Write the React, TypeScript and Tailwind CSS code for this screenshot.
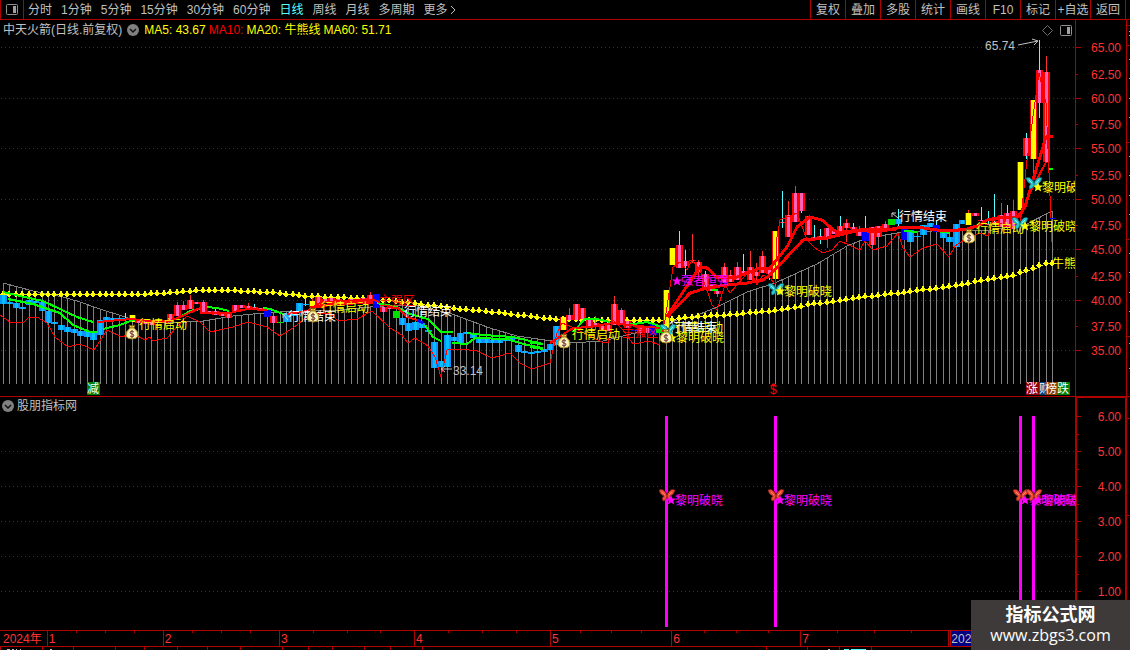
import React from 'react';

type Kind = 'up' | 'down' | 'signal' | 'navy' | 'green';

// [index, top, bottom, kind, wickTop?, wickBottom?, cyanWick?]
type Candle = [number, number, number, Kind, number?, number?, boolean?];

const periods = ['分时', '1分钟', '5分钟', '15分钟', '30分钟', '60分钟', '日线', '周线', '月线', '多周期'];
const tools = ['复权', '叠加', '多股', '统计', '画线', 'F10', '标记', '+自选', '返回'];

const months = [
  { label: '1', size: 'flex-[116]' },
  { label: '2', size: 'flex-[116]' },
  { label: '3', size: 'flex-[135]' },
  { label: '4', size: 'flex-[136]' },
  { label: '5', size: 'flex-[121]' },
  { label: '6', size: 'flex-[129]' },
  { label: '7', size: 'flex-[148]' },
];

const prices: [string, number][] = [
  ['65.00', 47], ['62.50', 74], ['60.00', 98], ['57.50', 124], ['55.00', 148], ['52.50', 175], ['50.00', 199],
  ['47.50', 225], ['45.00', 249], ['42.50', 276], ['40.00', 300], ['37.50', 326], ['35.00', 350],
];

const levels: [string, number][] = [
  ['6.00', 416], ['5.00', 451], ['4.00', 486], ['3.00', 521], ['2.00', 556], ['1.00', 591],
];

const candles: Candle[] = [
  [0, 295, 304, 'down', 291, 304, true], [1, 302, 304, 'down'], [2, 303, 308, 'down'], [3, 307, 309, 'down'],
  [4, 300, 305, 'down'], [5, 301, 303, 'down'], [6, 302, 311, 'down'], [7, 311, 323, 'down'],
  [8, 322, 324, 'down'], [9, 325, 330, 'down'], [10, 327, 332, 'down'], [11, 329, 333, 'down'],
  [12, 331, 336, 'down'], [13, 331, 337, 'down'], [14, 333, 340, 'down'], [15, 320, 335, 'down'],
  [16, 317, 320, 'down'], [17, 318, 320, 'down'], [18, 318, 320, 'down'], [19, 318, 320, 'down', 313, 320, true],
  [20, 315, 322, 'signal'], [21, 320, 323, 'up'], [22, 321, 324, 'up'], [23, 322, 325, 'up'],
  [24, 320, 323, 'up'], [25, 320, 323, 'up'], [26, 314, 322, 'up'], [27, 305, 316, 'up', 302, 316],
  [28, 305, 310, 'up', 301, 310], [29, 300, 309, 'up', 295, 309], [30, 302, 304, 'up'], [31, 302, 313, 'up', 300, 313],
  [32, 311, 314, 'up'], [33, 311, 315, 'up', 309, 315, true], [34, 313, 316, 'up'], [35, 312, 318, 'up'],
  [36, 305, 312, 'up'], [37, 305, 308, 'up'], [38, 306, 309, 'up', 303, 309], [39, 307, 309, 'up', 304, 309, true],
  [40, 308, 310, 'up'], [41, 309, 317, 'navy'], [42, 316, 323, 'up'], [43, 322, 323, 'green'],
  [44, 313, 322, 'down'], [45, 313, 316, 'down'], [46, 303, 311, 'down'], [47, 304, 305, 'down', 298, 306, true],
  [48, 301, 307, 'signal', 298, 308], [49, 297, 305, 'up'], [50, 299, 303, 'up'], [51, 298, 303, 'up'],
  [52, 299, 304, 'up'], [53, 300, 304, 'up'], [54, 299, 303, 'up'], [55, 299, 303, 'up'],
  [56, 298, 302, 'up'], [57, 295, 302, 'up', 292, 302], [58, 294, 308, 'navy'], [59, 307, 312, 'up'],
  [60, 307, 309, 'up'], [61, 311, 318, 'green'], [62, 318, 325, 'down'], [63, 323, 331, 'down'],
  [64, 322, 330, 'down'], [65, 323, 328, 'down'], [66, 330, 332, 'down'], [67, 342, 368, 'down'],
  [68, 361, 367, 'down'], [69, 335, 367, 'down'], [70, 337, 341, 'down'], [71, 333, 344, 'down'],
  [72, 332, 334, 'down'], [73, 333, 338, 'down'], [74, 337, 343, 'down'], [75, 339, 343, 'down'],
  [76, 340, 343, 'down'], [77, 338, 343, 'down'], [78, 338, 341, 'down'], [79, 337, 340, 'down'],
  [80, 345, 352, 'down'], [81, 351, 353, 'down'], [82, 352, 354, 'down'], [83, 351, 353, 'down'],
  [84, 349, 352, 'down'], [85, 344, 350, 'down'], [86, 326, 345, 'down'], [87, 317, 330, 'signal'],
  [88, 315, 320, 'up', 308, 320], [89, 304, 320, 'up'], [90, 308, 319, 'up'], [91, 318, 326, 'up'],
  [92, 323, 327, 'up', 316, 330], [93, 326, 330, 'up'], [94, 325, 331, 'up'], [95, 304, 325, 'up', 296, 325],
  [96, 310, 323, 'up', 308, 323], [97, 321, 328, 'up'], [98, 330, 331, 'navy'], [99, 327, 333, 'up'],
  [100, 327, 333, 'up'], [101, 324, 335, 'navy'], [102, 326, 333, 'green'], [103, 290, 328, 'signal'],
  [104, 248, 265, 'signal'], [105, 245, 268, 'up', 231, 268, true], [106, 261, 266, 'up', 250, 275, true],
  [107, 260, 261, 'up', 234, 263], [108, 262, 272, 'up', 260, 276], [109, 274, 288, 'up', 271, 288, true],
  [110, 285, 291, 'up'], [111, 291, 294, 'up', 289, 297], [112, 267, 282, 'up', 263, 282], [113, 275, 282, 'up', 270, 282],
  [114, 267, 280, 'up', 262, 280], [115, 271, 275, 'up', 254, 275, true], [116, 267, 280, 'up', 251, 280],
  [117, 272, 276, 'up', 263, 280], [118, 256, 273, 'up', 251, 273], [119, 270, 274, 'up', 270, 280, true],
  [120, 231, 279, 'signal'], [121, 222, 223, 'up', 191, 228, true], [122, 215, 237, 'up', 201, 237],
  [123, 193, 222, 'up', 186, 222], [124, 193, 211, 'up', 193, 213, true], [125, 216, 235, 'up'],
  [126, 237, 238, 'up', 225, 240, true], [127, 236, 237, 'up', 229, 244, true], [128, 228, 238, 'up', 228, 248],
  [129, 230, 234, 'up'], [130, 226, 236, 'up', 216, 236, true], [131, 223, 228, 'up', 219, 242],
  [132, 227, 229, 'up', 223, 232, true], [133, 230, 236, 'up', 226, 236], [134, 232, 241, 'navy', 216, 241, true],
  [135, 227, 245, 'up'], [136, 226, 237, 'up'], [137, 224, 229, 'up', 221, 229], [138, 219, 225, 'green'],
  [139, 219, 224, 'down', 209, 226, true], [140, 228, 240, 'navy'], [141, 230, 242, 'down'], [142, 236, 237, 'down'],
  [143, 225, 235, 'down'], [144, 223, 227, 'down'], [145, 225, 232, 'navy', 220, 232, true], [146, 230, 238, 'down'],
  [147, 237, 242, 'down'], [148, 224, 247, 'down'], [149, 220, 224, 'down'], [150, 213, 225, 'signal', 210, 225],
  [151, 213, 216, 'up'], [152, 220, 221, 'up', 207, 221, true], [153, 224, 225, 'up', 211, 225, true],
  [154, 222, 224, 'up', 194, 224, true], [155, 215, 227, 'up', 203, 227], [156, 213, 227, 'up', 205, 227, true],
  [157, 211, 229, 'up', 200, 229], [158, 162, 210, 'signal'], [159, 138, 156, 'up', 133, 159, true],
  [160, 100, 159, 'signal', 100, 177], [161, 70, 103, 'up', 40, 118, true], [162, 72, 162, 'up', 56, 162],
];

const envelope: [number, number][] = [
  [3, 283], [33, 291], [63, 297], [80, 302], [97, 308], [128, 318], [160, 322], [187, 322], [203, 321], [233, 316],
  [253, 314], [280, 312], [340, 310], [370, 307], [398, 305], [417, 305], [452, 314], [490, 328], [517, 336],
  [552, 341], [570, 343], [603, 341], [627, 335], [657, 328], [677, 320], [693, 317], [717, 307], [747, 292],
  [775, 283], [817, 264], [847, 246], [867, 238], [897, 233], [950, 230], [985, 231], [1025, 225], [1052, 211],
];

const ma60: [number, number][] = [
  [3, 294], [130, 294], [163, 293], [200, 290], [227, 290], [253, 291], [280, 293], [310, 296], [363, 298], [417, 303],
  [453, 308], [487, 311], [537, 317], [557, 319], [597, 320], [657, 320], [697, 316], [720, 315], [777, 310],
  [810, 304], [883, 294], [903, 292], [950, 286], [983, 280], [1013, 275], [1045, 263], [1053, 263],
];

const thinRedLines = [
  '98,322 130,319 150,321 170,321 187,314 200,308',
  '200,313 230,313 247,309 267,310',
  '287,314 307,311 320,303 337,301 373,300 380,302',
  '387,307 398,308 407,317 417,320',
  '550,343 573,328 590,327 613,323 627,325 660,328',
  '1020,217 1030,193 1046,162',
];

const redLines = [
  '310,308 333,304 373,302',
  '667,316 683,292 700,267 707,268 717,277 737,277 760,268 770,268 787,247 797,227 810,217 822,220 830,227 838,233 857,230 877,232 897,228 917,227 937,230 950,231 967,229 980,225 987,220 1003,217 1017,218 1025,207 1033,180 1046,137 1053,136',
  '667,317 690,293 707,288 727,285 747,283 763,280 770,275 787,257 803,240 827,238 860,230 897,229',
];

const greenLines = [
  '3,292 20,296 43,301 62,310 77,317 93,322',
  '8,299 33,304 60,313 73,325 90,332 98,332',
  '103,329 120,325 133,320 167,321',
  '180,317 190,311 200,309',
  '207,307 217,308 229,311',
  '263,308 270,309 283,314',
  '377,303 397,307 410,314 428,319 441,332 453,332',
  '425,325 433,337 441,341',
  '452,343 467,344 475,338 507,339 527,345 543,348',
  '467,333 483,335 513,337 543,344',
  '530,343 543,344',
  '530,347 543,349',
  '573,332 585,319 597,319 610,322',
  '627,325 647,322 663,327',
  '711,290 718,290',
  '904,231 917,232',
  '937,231 950,233',
  '1049,169 1053,169',
];

const lowLine =
  '0,315 10,322 23,323 29,317 37,317 47,323 55,337 68,347 80,344 94,350 107,330 122,337 132,333 145,340 150,337 153,341 167,338 187,316 200,322 210,332 233,327 248,322 267,327 280,336 293,328 303,320 313,313 330,313 338,321 357,319 372,311 390,328 402,335 408,343 415,338 428,346 435,357 441,377 447,350 460,349 477,351 492,358 510,353 520,363 532,369 550,363 557,333 562,323 572,327 602,342 608,343 613,320 623,330 633,344 650,341 659,345 665,320 673,267 680,262 687,270 692,260 700,270 712,305 717,310 725,285 730,293 750,270 757,285 763,275 770,278 775,284 777,237 780,220 797,213 807,240 815,248 823,253 832,250 840,241 860,250 865,241 873,250 887,246 898,233 903,248 910,257 923,248 937,244 949,257 955,246 967,238 980,233 988,236 993,220 1007,226 1020,227 1027,160 1039,73 1046,103 1052,242';

const butterflyPath =
  'M0 1 Q4 -1 7 4 L8 6 L9 4 Q12 -1 16 1 Q15 6 11 7 Q14 9 12 12 Q9 12 8 8 Q7 12 4 12 Q2 9 5 7 Q1 6 0 1Z';

const columnX = (i: number) => Math.round(3 + 6.436 * i);

const valueAt = (points: [number, number][], x: number) => {
  const next = points.findIndex(([px]) => px >= x);
  if (next <= 0) return next === 0 ? points[0][1] : points[points.length - 1][1];
  const [x0, y0] = points[next - 1];
  const [x1, y1] = points[next];
  return Math.round(y0 + ((y1 - y0) * (x - x0)) / (x1 - x0));
};

const columns = Array.from({ length: 164 }, (_, i) => columnX(i));

const CandleShape = ({ candle }: { candle: Candle }) => {
  const [i, top, bottom, kind, wickTop, wickBottom, cyan] = candle;
  const x = columnX(i);
  const h = Math.max(bottom - top, 1);
  const colors: Record<Kind, [string, string]> = {
    up: ['#ff0000', '#ff60b8'],
    down: ['#1090ff', '#00c0ff'],
    signal: ['#ff0000', '#ffff00'],
    navy: ['#0000ff', '#0000ff'],
    green: ['#00e000', '#00e000'],
  };
  const [edge, core] = colors[kind];
  const wide = kind === 'signal';
  return (
    <g>
      <rect x={x - 3} y={top} width={7} height={h} fill={edge} />
      <rect x={wide ? x - 2 : x - 1} y={top} width={wide ? 5 : 3} height={h} fill={core} />
      {wickTop !== undefined && wickTop < top && (
        <rect x={x} y={wickTop} width={1} height={top - wickTop} fill={cyan ? '#55ffff' : '#ff3030'} />
      )}
      {wickBottom !== undefined && wickBottom > bottom && (
        <rect x={x} y={bottom} width={1} height={wickBottom - bottom} fill={cyan ? '#55ffff' : '#ff3030'} />
      )}
    </g>
  );
};

const Butterfly = ({ x, y, red }: { x: number; y: number; red?: boolean }) => (
  <g transform={`translate(${x - 8} ${y - 6})`}>
    <path d={butterflyPath} fill={red ? '#f04a38' : '#28c8d0'} stroke={red ? '#7a1c10' : '#0c6070'} strokeWidth="0.6" />
    <path d="M3 3 L6 6 M13 3 L10 6" stroke={red ? '#ff8a60' : '#80f4f4'} />
    <path d="M8 5 V10 M8 5 L6 2 M8 5 L10 2" stroke={red ? '#5a1008' : '#0a5060'} strokeWidth="0.7" />
  </g>
);

const MoneyBag = ({ x, y }: { x: number; y: number }) => (
  <g transform={`translate(${x - 7} ${y - 8})`}>
    <path d="M4 1 L7 2 L10 1 L9 4 H5Z" fill="#f0d040" stroke="#806010" />
    <path d="M5 4 H9 Q14 8 13 12 Q12 15 7 15 Q2 15 1 12 Q0 8 5 4Z" fill="#f8ec90" stroke="#a08020" />
    <circle cx="7" cy="10" r="4" fill="#fff4d0" />
    <path d="M9 8 Q7 6 5 8 Q5 10 7 10 Q9 10 9 12 Q7 14 5 12 M7 6 V14" fill="none" stroke="#703828" />
  </g>
);

const Star = ({ x, y, color }: { x: number; y: number; color: string }) => (
  <polygon
    transform={`translate(${x} ${y})`}
    points="0,-5 1.4,-1.6 5,-1.4 2.2,0.8 3.2,4.4 0,2.4 -3.2,4.4 -2.2,0.8 -5,-1.4 -1.4,-1.6"
    fill={color}
  />
);

const Tag = ({ x, y, color, children }: { x: number; y: number; color: string; children: string }) => (
  <text x={x} y={y + 5} fill={color}>{children}</text>
);

const Badge = ({ x, color, children }: { x: number; color: string; children: string }) => (
  <g>
    <rect x={x} y={382} width={13} height={13} fill={color} />
    <text x={x} y={393} fill="#ffffff">{children}</text>
  </g>
);

const ChevronDot = () => (
  <svg viewBox="0 0 12 12" className="size-3 shrink-0">
    <circle cx="6" cy="6" r="6" fill="#808080" />
    <path d="M3 5 L6 8 L9 5" fill="none" stroke="#101010" strokeWidth="1.5" />
  </svg>
);

const PanelIcon = () => (
  <svg viewBox="0 0 12 11" className="h-[11px] w-3 shrink-0">
    <rect x="0.5" y="0.5" width="11" height="10" rx="1" fill="none" stroke="#909090" />
    <rect x="7" y="2" width="3" height="7" fill="#a0a0a0" />
  </svg>
);

const PriceChart = () => (
  <svg viewBox="0 20 1130 376" className="block h-auto w-full text-[12px]" role="img" aria-label="日线">
    <defs>
      <clipPath id="plot">
        <rect x="0" y="20" width="1075" height="376" />
      </clipPath>
    </defs>

    {/* Grid and price axis */}
    <g shapeRendering="crispEdges">
      {prices.map(([label, y], i) => (
        <g key={label}>
          {i % 2 === 0 && <path d={`M1 ${y + 0.5} H1075`} stroke="#b00000" strokeDasharray="1 3" />}
          <rect x={1076} y={y} width={i % 2 === 0 ? 5 : 2} height={1} fill="#b00000" />
        </g>
      ))}
      <rect x={1075} y={20} width={1} height={376} fill="#b00000" />
      <rect x={1126} y={20} width={1} height={376} fill="#b00000" />
      {[25, 45, 142, 239, 336].map((y) => (
        <rect key={y} x={1127} y={y} width={3} height={1} fill="#b00000" />
      ))}
      {[31, 35, 59, 78, 98, 117, 156, 175, 195, 214, 253, 272, 292, 311, 343, 368].map((y) => (
        <rect key={y} x={1129} y={y} width={1} height={1} fill="#a0a0a0" />
      ))}
    </g>
    <g fill="#ff3232" textAnchor="end">
      {prices.map(([label, y]) => (
        <text key={label} x={1121} y={y + 5}>{label}</text>
      ))}
    </g>

    <g clipPath="url(#plot)">
      <g shapeRendering="crispEdges" fill="#808080">
        {columns.map((x) => {
          const y = valueAt(envelope, x);
          return <rect key={x} x={x} y={y} width={1} height={384 - y} />;
        })}
        <polyline points={envelope.map((p) => p.join(',')).join(' ')} fill="none" stroke="#808080" />
      </g>

      {/* Long average */}
      <g fill="#ffff00" shapeRendering="crispEdges">
        {columns.map((x) => {
          const y = valueAt(ma60, x);
          return <path key={x} d={`M${x - 3} ${y} h1 v-1 h1 v-2 h2 v2 h1 v1 h2 v1 h-2 v1 h-1 v1 h-2 v-1 h-1 v-1 h-1z`} />;
        })}
      </g>

      <g shapeRendering="crispEdges">
        {candles.map((candle) => (
          <CandleShape key={candle[0]} candle={candle} />
        ))}
      </g>

      {/* Short averages */}
      <g fill="none" shapeRendering="crispEdges">
        <polyline points={lowLine} stroke="#ff0000" />
        {greenLines.map((points) => (
          <polyline key={points} points={points} stroke="#00ff00" strokeWidth={2} />
        ))}
        {thinRedLines.map((points) => (
          <polyline key={points} points={points} stroke="#ff0000" strokeWidth={2} />
        ))}
        {redLines.map((points) => (
          <polyline key={points} points={points} stroke="#ff0000" strokeWidth={3} />
        ))}
        <path d="M417 320 L423 323" stroke="#0000ff" strokeWidth={3} />
        <path d="M1050 218 H1056" stroke="#0000ff" />
      </g>

      {/* Signals */}
      <Tag x={379} y={300} color="#ff0000">主强区</Tag>
      <Tag x={622} y={332} color="#ff0000">主强区</Tag>
      <Tag x={139} y={324} color="#ffff00">行情启动</Tag>
      <Tag x={321} y={307} color="#ffff00">行情启动</Tag>
      <Tag x={572} y={334} color="#ffff00">行情启动</Tag>
      <Tag x={675} y={327} color="#ffff00">行情启动</Tag>
      <Tag x={976} y={228} color="#ffff00">行情启动</Tag>
      <Tag x={288} y={316} color="#ffffff">行情结束</Tag>
      <Tag x={404} y={311} color="#ffffff">行情结束</Tag>
      <Tag x={669} y={327} color="#ffffff">行情结束</Tag>
      <Tag x={899} y={216} color="#ffffff">行情结束</Tag>
      <path d="M288 320 L283 314 M283 318 V314 H287 M898 218 L892 213 M892 217 V213 H896" fill="none" stroke="#d0d0d0" />

      <Butterfly x={668} y={330} />
      <Butterfly x={776} y={289} />
      <Butterfly x={1020} y={223} />
      <Butterfly x={1034} y={183} />
      <Star x={677} y={281} color="#ff00ff" />
      <Tag x={681} y={280} color="#ff00ff">强者恒强</Tag>
      <Star x={672} y={338} color="#ffff00" />
      <Tag x={676} y={337} color="#ffff00">黎明破晓</Tag>
      <Star x={780} y={291} color="#ffff00" />
      <Tag x={784} y={291} color="#ffff00">黎明破晓</Tag>
      <Star x={1025} y={226} color="#ffff00" />
      <Tag x={1029} y={226} color="#ffff00">黎明破晓</Tag>
      <Star x={1038} y={187} color="#ffff00" />
      <Tag x={1042} y={187} color="#ffff00">黎明破晓</Tag>
      <Tag x={1052} y={263} color="#ffff00">牛熊线</Tag>
      <MoneyBag x={132} y={332} />
      <MoneyBag x={313} y={315} />
      <MoneyBag x={564} y={341} />
      <MoneyBag x={666} y={336} />
      <MoneyBag x={969} y={236} />

      <Tag x={453} y={370} color="#c0c0c0">33.14</Tag>
      <path d="M441 369 H452 M445 366 L441 369 L445 372" fill="none" stroke="#c0c0c0" />
      <Tag x={985} y={45} color="#c0c0c0">65.74</Tag>
      <path d="M1018 45 L1038 41 M1032 39 L1038 41 L1034 45" fill="none" stroke="#c0c0c0" />

      <Badge x={87} color="#008000">减</Badge>
      <Badge x={1026} color="#900000">涨</Badge>
      <Badge x={1039} color="#004080">财</Badge>
      <Badge x={1045} color="#904000">榜</Badge>
      <Badge x={1057} color="#008000">跌</Badge>
      <text x={770} y={394} fill="#ff0000">$</text>
      <path d="M770 386 L773.5 383 L777 386Z" fill="#ff0000" />
    </g>
  </svg>
);

const IndicatorChart = () => (
  <svg viewBox="0 397 1130 233" className="block h-auto w-full text-[12px]" role="img" aria-label="股朋指标网">
    <defs>
      <clipPath id="indicator">
        <rect x="0" y="397" width="1076" height="233" />
      </clipPath>
    </defs>
    <g shapeRendering="crispEdges">
      {levels.map(([label, y], i) => (
        <g key={label}>
          {i > 0 && <path d={`M1 ${y + 0.5} H1075`} stroke="#b00000" strokeDasharray="1 3" />}
          <rect x={1077} y={y} width={4} height={1} fill="#b00000" />
          {i < 5 && <rect x={1077} y={y + 18} width={2} height={1} fill="#b00000" />}
        </g>
      ))}
      <rect x={1075} y={397} width={2} height={233} fill="#b00000" />
      <rect x={1125} y={397} width={2} height={233} fill="#b00000" />
      <rect x={1075} y={397} width={52} height={1} fill="#b00000" />
      {[418, 515, 612].map((y) => (
        <rect key={y} x={1127} y={y} width={3} height={1} fill="#b00000" />
      ))}
    </g>
    <g fill="#ff3232" textAnchor="end">
      {levels.map(([label, y]) => (
        <text key={label} x={1121} y={y + 5}>{label}</text>
      ))}
    </g>
    <g clipPath="url(#indicator)">
      {[666, 775, 1020, 1033].map((x) => (
        <rect key={x} x={x - 1} y={416} width={3} height={211} fill="#ff00ff" />
      ))}
      {[667, 776, 1021, 1034].map((x) => (
        <g key={x}>
          <Butterfly x={x} y={495} red />
          <Star x={x + 4} y={500} color="#ff00ff" />
          <Tag x={x + 8} y={500} color="#ff00ff">黎明破晓</Tag>
        </g>
      ))}
    </g>
  </svg>
);

const App: React.FC = () => {
  return (
    <div className="relative min-h-screen overflow-hidden bg-black font-['Liberation_Sans','Noto_Sans_CJK_SC',sans-serif] text-[12px] leading-4 text-[#c0c0c0]">
      {/* Toolbar */}
      <header className="flex h-5 items-stretch justify-between border-b border-[#b00000] pr-1">
        <nav className="flex items-stretch gap-1">
          <button aria-label="面板" className="flex w-6 items-center justify-center border-x border-[#b00000]">
            <PanelIcon />
          </button>
          <div className="flex items-center gap-[9px] whitespace-nowrap">
            {periods.map((name) => (
              <button key={name} className={name === '日线' ? 'text-[#55ffff]' : ''}>
                {name}
              </button>
            ))}
            <button className="flex items-center gap-0.5">
              更多
              <svg viewBox="0 0 6 10" className="h-2.5 w-1.5">
                <path d="M1 1 L5 5 L1 9" fill="none" stroke="#c0c0c0" />
              </svg>
            </button>
          </div>
        </nav>
        <div className="flex items-stretch border-r border-[#b00000]">
          {tools.map((name) => (
            <button key={name} className="w-[35px] border-l border-[#b00000] whitespace-nowrap">
              {name}
            </button>
          ))}
        </div>
      </header>

      {/* Price panel */}
      <section className="relative">
        <div className="absolute inset-x-0 top-0 flex items-center justify-between pt-0.5 pr-[58px] pl-[3px]">
          <div className="flex items-center gap-[5px]">
            <h1>中天火箭(日线.前复权)</h1>
            <ChevronDot />
            <div className="flex gap-[3px] text-[#ffff00]">
              <span>MA5: 43.67</span>
              <span className="text-[#ff0000]">MA10:</span>
              <span>MA20: 牛熊线</span>
              <span>MA60: 51.71</span>
            </div>
          </div>
          <div className="flex items-center gap-[7px]">
            <svg viewBox="0 0 11 11" className="size-[11px]">
              <path d="M5.5 0.5 L10.5 5.5 L5.5 10.5 L0.5 5.5Z" fill="none" stroke="#707070" />
            </svg>
            <PanelIcon />
          </div>
        </div>
        <PriceChart />
      </section>

      {/* Indicator panel */}
      <section className="relative border-t border-[#b00000]">
        <div className="absolute top-0 left-0 flex items-center gap-[3px] pt-px pl-0.5">
          <ChevronDot />
          <h2>股朋指标网</h2>
        </div>
        <IndicatorChart />
      </section>

      {/* Time axis */}
      <div className="flex h-[17px] border-y border-[#b00000] text-[#ff3232]">
        <div className="min-w-0 flex-[47]">
          <span className="pl-[3px] whitespace-nowrap">2024年</span>
        </div>
        {months.map(({ label, size }) => (
          <div key={label} className={`relative flex border-l border-[#b00000] ${size}`}>
            <span className="absolute left-px">{label}</span>
            {[0, 1, 2, 3].map((week) => (
              <i key={week} className={`h-0.5 flex-1 ${week > 0 ? 'border-l border-[#b00000]' : ''}`} />
            ))}
          </div>
        ))}
        <div className="flex flex-[182] border-l border-[#b00000]">
          <span className="ml-px border-l border-[#b00000] bg-[#000080] text-[#c0c0c0]">2024</span>
        </div>
      </div>
      <svg viewBox="0 0 1130 3" className="block h-auto w-full" shapeRendering="crispEdges">
        {[0, 42, 73, 115, 144, 177, 207, 240, 282, 308, 332, 364, 390, 422, 766, 807, 839, 871].map((x) => (
          <rect key={x} x={x} y={0} width={1} height={3} fill="#b00000" />
        ))}
        <path d="M7 2.5 h3 m2 0 h2 m2 0 h1 m3 0 h1 m29 0 h2 M828 2.5 h2" stroke="#c0c0c0" />
        <path d="M844 2.5 h5 m2 0 h15" stroke="#55ffff" />
      </svg>

      <footer className="absolute right-0 bottom-0 flex h-[50px] w-[159px] flex-col items-center justify-center bg-[#3e3a3a] text-white">
        <strong className="text-[18px] leading-5">指标公式网</strong>
        <span className="font-['Open_Sans','Noto_Sans',sans-serif] text-[16px] leading-5">www.zbgs3.com</span>
      </footer>
    </div>
  );
};

export default App;
